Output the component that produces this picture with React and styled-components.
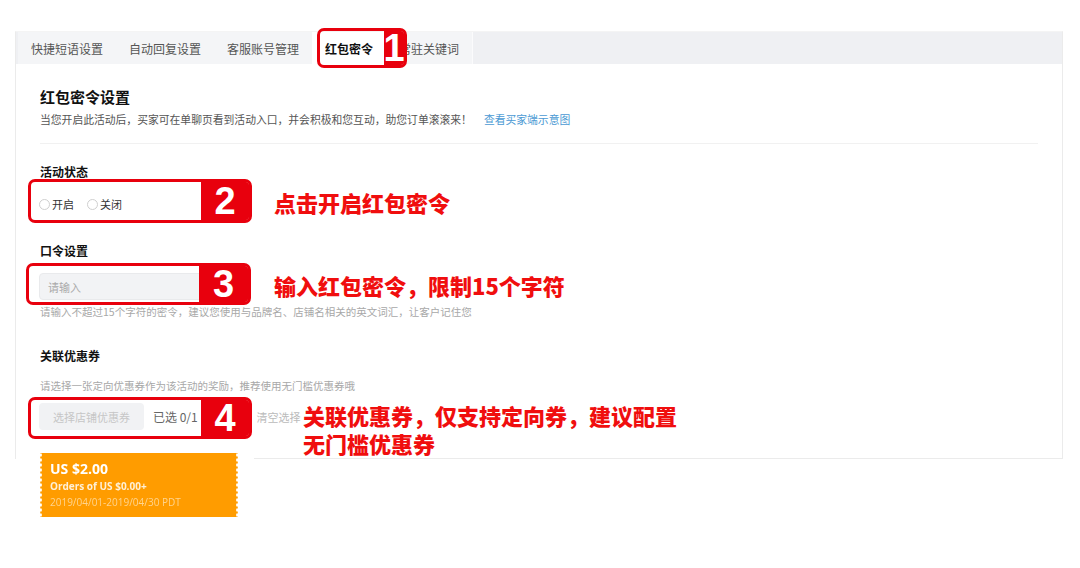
import React from "react";
import styled, { createGlobalStyle } from "styled-components";

const GlobalStyle = createGlobalStyle`
  body {
    margin: 0;
    background: #ffffff;
    font-family: "Noto Sans CJK SC", "Noto Sans", sans-serif;
    color: #222;
  }
`;

const Page = styled.div`
  position: relative;
  width: 1080px;
  height: 568px;
  padding: 31px 0 0 15px;
  box-sizing: border-box;
  overflow: hidden;
`;

const Panel = styled.div`
  width: 1048px;
  box-sizing: border-box;
  border: 1px solid #ebebeb;
  border-top-color: #f4f4f4;
  background: #fff;
`;

const TabBar = styled.div`
  display: flex;
  height: 32px;
  padding-left: 2px;
  background: #eff0f3;
`;

const Tab = styled.div`
  display: flex;
  align-items: center;
  padding: 0 13px;
  font-size: 12px;
  color: ${(p) => (p.$active ? "#111" : "#555")};
  font-weight: ${(p) => (p.$active ? 700 : 400)};
  background: ${(p) => (p.$active ? "#fff" : "#f4f5f7")};
  box-shadow: 1px 0 0 #fbfbfc;
  white-space: nowrap;
`;

const Content = styled.div`
  padding: 23px 24px 28px 24px;
`;

const Heading = styled.div`
  font-size: 15px;
  line-height: 20px;
  font-weight: 700;
  color: #111;
`;

const Desc = styled.div`
  margin-top: 4px;
  font-size: 10.8px;
  line-height: 16px;
  color: #555;
  white-space: nowrap;
`;

const Link = styled.span`
  margin-left: 12px;
  color: #4b9ad4;
`;

const Divider = styled.div`
  margin-top: 16px;
  height: 1px;
  background: #f1f1f1;
`;

const Label = styled.div`
  margin-top: ${(p) => p.$top}px;
  font-size: 12px;
  line-height: 18px;
  font-weight: 700;
  color: #111;
`;

const RadioRow = styled.div`
  display: flex;
  align-items: center;
  gap: 13px;
  height: 20px;
  margin: 13px 0 0 -1px;
`;

const Radio = styled.label`
  display: flex;
  align-items: center;
  gap: 2px;
  font-size: 11px;
  color: #333;
`;

const Dot = styled.span`
  width: 9px;
  height: 9px;
  border: 1px solid #cfcfcf;
  border-radius: 50%;
  background: #fff;
`;

const Input = styled.div`
  display: flex;
  align-items: center;
  margin: 13px 0 0 -1px;
  width: 200px;
  height: 27px;
  padding-left: 8px;
  box-sizing: border-box;
  background: #f2f3f5;
  border: 1px solid #e9eaec;
  border-radius: 4px;
  font-size: 11px;
  color: #aaa;
`;

const Hint = styled.div`
  margin-top: ${(p) => p.$top}px;
  font-size: 10.5px;
  line-height: 14px;
  color: #a8a8a8;
  white-space: nowrap;
`;

const ButtonRow = styled.div`
  display: flex;
  align-items: center;
  margin: 10px 0 0 -1px;
  height: 27px;
  font-size: 12px;
  color: #666;
`;

const DisabledButton = styled.div`
  display: flex;
  align-items: center;
  justify-content: center;
  width: 105px;
  height: 27px;
  border-radius: 4px;
  background: #f1f2f4;
  color: #c6c6c6;
  font-size: 11px;
  margin-right: 9px;
`;

const Clear = styled.span`
  margin-left: 44px;
  font-size: 11px;
  color: #bbb;
`;

const CouponHolder = styled.div`
  width: 214px;
  margin: -12px 0 0 1px;
  padding: 6px 0 0 24px;
  background: #fff;
  position: relative;
`;

const Coupon = styled.div`
  width: 198px;
  height: 64px;
  box-sizing: border-box;
  padding: 7px 10px 0;
  background: #ff9c00;
  font-family: "Open Sans", "Noto Sans", sans-serif;
  -webkit-mask:
    radial-gradient(circle at 0 50%, transparent 1.6px, #000 2.2px) left / 51% 5px repeat-y,
    radial-gradient(circle at 100% 50%, transparent 1.6px, #000 2.2px) right / 51% 5px repeat-y;
  mask:
    radial-gradient(circle at 0 50%, transparent 1.6px, #000 2.2px) left / 51% 5px repeat-y,
    radial-gradient(circle at 100% 50%, transparent 1.6px, #000 2.2px) right / 51% 5px repeat-y;
`;

const Amount = styled.div`
  font-size: 14px;
  line-height: 18px;
  font-weight: 700;
  color: #fff;
`;

const Condition = styled.div`
  font-size: 10px;
  line-height: 16px;
  font-weight: 700;
  color: #fff0d6;
`;

const Period = styled.div`
  font-size: 10px;
  line-height: 16px;
  color: #ffd48e;
`;

/* red call-out boxes laid over the screenshot */
const Callout = styled.div`
  position: absolute;
  left: ${(p) => p.$x}px;
  top: ${(p) => p.$y}px;
  width: ${(p) => p.$w}px;
  height: ${(p) => p.$h}px;
  box-sizing: border-box;
  border: 3px solid #e8000d;
  border-radius: 7px;
  display: flex;
  justify-content: flex-end;
`;

const Num = styled.div`
  display: flex;
  align-items: center;
  justify-content: center;
  width: ${(p) => p.$w}px;
  background: #e8000d;
  color: #fff;
  font-family: "Liberation Sans", Arial, sans-serif;
  font-weight: 700;
  font-size: 38px;
  line-height: 1;
  border-radius: 0 3px 3px 0;
`;

const Note = styled.div`
  position: absolute;
  left: ${(p) => p.$x}px;
  top: ${(p) => p.$y}px;
  display: flex;
  flex-direction: column;
`;

const NoteLine = styled.div`
  height: 28px;
  font-size: 22px;
  line-height: 28px;
  font-weight: 900;
  color: #f00e0e;
  white-space: nowrap;
`;

const tabs = ["快捷短语设置", "自动回复设置", "客服账号管理", "红包密令", "常驻关键词"];

export default function App() {
  return (
    <>
      <GlobalStyle />
      <Page>
        <Panel>
          <TabBar>
            {tabs.map((t) => (
              <Tab key={t} $active={t === "红包密令"}>
                {t}
              </Tab>
            ))}
          </TabBar>
          <Content>
            <Heading>红包密令设置</Heading>
            <Desc>
              当您开启此活动后，买家可在单聊页看到活动入口，并会积极和您互动，助您订单滚滚来！
              <Link>查看买家端示意图</Link>
            </Desc>
            <Divider />

            <Label $top={19}>活动状态</Label>
            <RadioRow>
              <Radio>
                <Dot />
                开启
              </Radio>
              <Radio>
                <Dot />
                关闭
              </Radio>
            </RadioRow>

            <Label $top={28}>口令设置</Label>
            <Input>请输入</Input>
            <Hint $top={5}>
              请输入不超过15个字符的密令，建议您使用与品牌名、店铺名相关的英文词汇，让客户记住您
            </Hint>

            <Label $top={28}>关联优惠券</Label>
            <Hint $top={14}>请选择一张定向优惠券作为该活动的奖励，推荐使用无门槛优惠券哦</Hint>
            <ButtonRow>
              <DisabledButton>选择店铺优惠券</DisabledButton>
              已选 0/1 张
              <Clear>清空选择</Clear>
            </ButtonRow>
          </Content>
        </Panel>

        <CouponHolder>
          <Coupon>
            <Amount>US $2.00</Amount>
            <Condition>Orders of US $0.00+</Condition>
            <Period>2019/04/01-2019/04/30 PDT</Period>
          </Coupon>
        </CouponHolder>

        <Callout $x={317} $y={28} $w={90} $h={40}>
          <Num $w={20}>1</Num>
        </Callout>
        <Callout $x={28} $y={179} $w={224} $h={44}>
          <Num $w={48}>2</Num>
        </Callout>
        <Callout $x={26} $y={263} $w={225} $h={42}>
          <Num $w={49}>3</Num>
        </Callout>
        <Callout $x={28} $y={397} $w={224} $h={42}>
          <Num $w={48}>4</Num>
        </Callout>

        <Note $x={274} $y={188}>
          <NoteLine>点击开启红包密令</NoteLine>
        </Note>
        <Note $x={274} $y={271}>
          <NoteLine>输入红包密令，限制15个字符</NoteLine>
        </Note>
        <Note $x={303} $y={401}>
          <NoteLine>关联优惠券，仅支持定向券，建议配置</NoteLine>
          <NoteLine>无门槛优惠券</NoteLine>
        </Note>
      </Page>
    </>
  );
}
